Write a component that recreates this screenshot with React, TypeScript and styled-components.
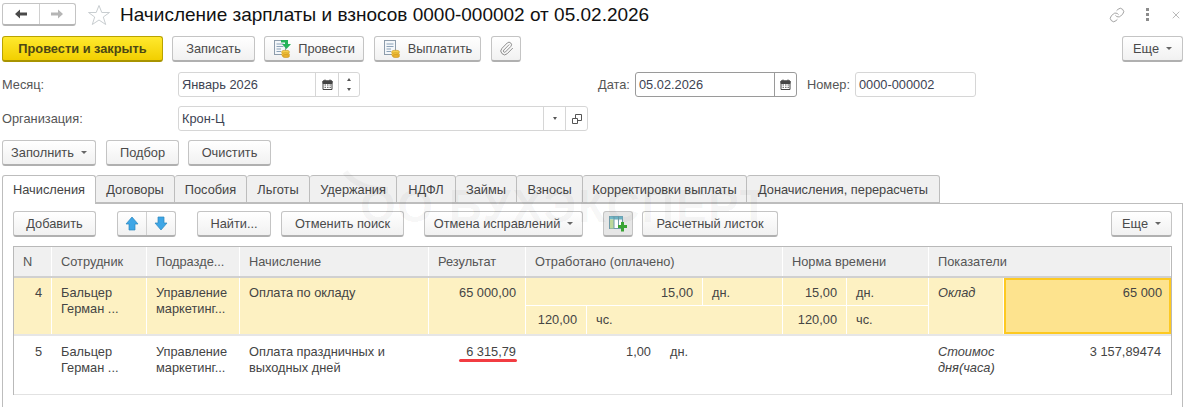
import React from 'react'
import styled, { createGlobalStyle } from 'styled-components'
import { Link, Paperclip, X } from 'lucide-react'

const GlobalStyle = createGlobalStyle`
  html, body {
    margin: 0;
    padding: 0;
    background: #fff;
  }
`

const Page = styled.div`
  position: relative;
  width: 1187px;
  height: 407px;
  overflow: hidden;
  background: #fff;
  color: #4a4a4a;
  font-family: 'Liberation Sans', Arial, sans-serif;
  font-size: 12.8px;
`

const Watermark = styled.div`
  position: absolute;
  left: 360px;
  top: 184px;
  font-size: 46px;
  font-weight: 700;
  line-height: 44px;
  letter-spacing: 1.5px;
  white-space: nowrap;
  color: rgba(0, 0, 0, 0.04);
  pointer-events: none;
`

const Swoosh = styled.svg`
  position: absolute;
  left: 342px;
  top: 170px;
  pointer-events: none;
`

const TitleBar = styled.div`
  display: flex;
  align-items: center;
  height: 23px;
  padding: 3px 0 0 2px;
`

const NavGroup = styled.div`
  display: flex;
  width: 74px;
  height: 23px;
  box-sizing: border-box;
  border: 1px solid #c4c4c4;
  border-bottom: 2px solid #b5b5b5;
  border-radius: 3px;
`

const NavButton = styled.div<{ $divided?: boolean }>`
  flex: 1;
  display: flex;
  align-items: center;
  justify-content: center;
  border-left: ${({ $divided }) => ($divided ? '1px solid #d0d0d0' : 'none')};
`

const StarBox = styled.div`
  display: flex;
  margin: 0 9px 0 11px;
`

const Title = styled.h1`
  flex: 1;
  margin: 0;
  font-size: 19px;
  font-weight: 400;
  line-height: 23px;
  color: #111;
  white-space: nowrap;
`

const WindowTools = styled.div`
  display: flex;
  align-items: center;
  gap: 21px;
  margin-right: 5px;
  color: #8c8c8c;
`

const Dots = styled.div`
  display: flex;
  flex-direction: column;
  gap: 2px;

  i {
    display: block;
    width: 3px;
    height: 3px;
    background: #8c8c8c;
  }
`

const CommandBar = styled.div<{ $top: number }>`
  display: flex;
  align-items: center;
  justify-content: space-between;
  margin-top: ${({ $top }) => $top}px;
  padding: 0 4px 0 2px;
`

const ButtonGroup = styled.div`
  display: flex;
`

const Button = styled.div<{ $width: number; $gap?: number; $pressed?: boolean }>`
  display: flex;
  align-items: center;
  justify-content: center;
  gap: 5px;
  box-sizing: border-box;
  width: ${({ $width }) => $width}px;
  height: 26px;
  margin-left: ${({ $gap }) => $gap ?? 0}px;
  flex-shrink: 0;
  border: 1px solid #c4c4c4;
  border-bottom: 2px solid #b0b0b0;
  border-radius: 3px;
  background: ${({ $pressed }) => ($pressed ? '#e6e6e6' : 'linear-gradient(#ffffff, #f1f1f1)')};
  color: #4a4a4a;
  white-space: nowrap;
`

const PrimaryButton = styled(Button)`
  border-color: #b9a300;
  border-bottom-color: #a89400;
  background: linear-gradient(#ffe92e, #f2cf00);
  color: #4c4714;
  font-weight: 700;
`

const Caret = styled.span`
  display: inline-block;
  width: 0;
  height: 0;
  margin-left: 2px;
  border-left: 3px solid transparent;
  border-right: 3px solid transparent;
  border-top: 3px solid #666;
`

const FormRow = styled.div<{ $top: number }>`
  display: flex;
  align-items: center;
  height: 25px;
  margin-top: ${({ $top }) => $top}px;
  padding-left: 2px;
`

const Label = styled.label<{ $width: number; $left?: number }>`
  flex-shrink: 0;
  width: ${({ $width }) => $width}px;
  margin-left: ${({ $left }) => $left ?? 0}px;
  color: #555;
`

const Field = styled.div<{ $width: number; $active?: boolean; $left?: number }>`
  display: flex;
  flex-shrink: 0;
  box-sizing: border-box;
  width: ${({ $width }) => $width}px;
  height: 25px;
  margin-left: ${({ $left }) => $left ?? 0}px;
  border: 1px solid ${({ $active }) => ($active ? '#9a9a9a' : '#d6d6d6')};
  border-radius: 3px;
  background: #fff;
`

const FieldText = styled.span`
  flex: 1;
  padding-left: 3px;
  line-height: 23px;
  color: #3d4352;
`

const FieldAction = styled.span<{ $width: number; $active?: boolean }>`
  display: flex;
  flex-direction: column;
  align-items: center;
  justify-content: center;
  gap: 7px;
  width: ${({ $width }) => $width}px;
  border-left: 1px solid ${({ $active }) => ($active ? '#9a9a9a' : '#d6d6d6')};
`

const TinyCaret = styled.i<{ $up?: boolean }>`
  display: block;
  width: 0;
  height: 0;
  border-left: 2px solid transparent;
  border-right: 2px solid transparent;
  border-top: ${({ $up }) => ($up ? 'none' : '3px solid #555')};
  border-bottom: ${({ $up }) => ($up ? '3px solid #555' : 'none')};
`

const TabStrip = styled.div`
  display: flex;
  height: 28px;
  margin-top: 9px;
  padding-left: 2px;
`

const Tab = styled.div<{ $width: number; $active?: boolean }>`
  box-sizing: border-box;
  width: ${({ $width }) => $width}px;
  height: ${({ $active }) => ($active ? '29px' : '28px')};
  position: relative;
  z-index: ${({ $active }) => ($active ? 1 : 0)};
  border: 1px solid #bdbdbd;
  border-left-width: ${({ $active }) => ($active ? '1px' : '0')};
  border-bottom: ${({ $active }) => ($active ? 'none' : '1px solid #bdbdbd')};
  border-radius: 3px 3px 0 0;
  background: ${({ $active }) => ($active ? '#fff' : '#f0f0f0')};
  text-align: center;
  line-height: 27px;
  color: #444;
  white-space: nowrap;
`

const Panel = styled.div`
  box-sizing: border-box;
  width: 1181px;
  height: 220px;
  margin-left: 2px;
  padding: 7px 10px 0;
  border: 1px solid #bdbdbd;
`

const PanelBar = styled.div`
  display: flex;
  align-items: center;
  height: 26px;
  margin-bottom: 9px;
`

const BarSpacer = styled.div`
  flex: 1;
`

const ArrowPair = styled.div`
  display: flex;
  width: 59px;
  height: 26px;
  box-sizing: border-box;
  margin-left: 21px;
  flex-shrink: 0;
  border: 1px solid #c4c4c4;
  border-bottom: 2px solid #b0b0b0;
  border-radius: 3px;
  background: linear-gradient(#ffffff, #f1f1f1);
`

const Table = styled.div`
  box-sizing: border-box;
  width: 1159px;
  border: 1px solid #b9b9b9;
  border-bottom: none;
`

const tracks = '38px 95px 93px 189px 97px 61px 116px 80px 64px 82px 75px 167px'
const sparseTracks = '38px 95px 93px 189px 97px 135px 122px 146px 75px 167px'

const HeaderRow = styled.div`
  display: grid;
  grid-template-columns: ${tracks};
  height: 29px;
  border-bottom: 2px solid #d0d0d0;
  background: #f0f0f0;
`

const HeaderCell = styled.div<{ $span?: number }>`
  grid-column: span ${({ $span }) => $span ?? 1};
  box-sizing: border-box;
  padding-left: 9px;
  border-right: 1px solid #fff;
  line-height: 29px;
  color: #555;
  white-space: nowrap;
  overflow: hidden;
`

const DataRow = styled.div<{ $selected?: boolean; $tracks: string }>`
  display: grid;
  grid-template-columns: ${({ $tracks }) => $tracks};
  grid-template-rows: 28px 28px;
  height: ${({ $selected }) => ($selected ? '56px' : '58px')};
  background: ${({ $selected }) => ($selected ? '#fdf1c2' : '#fff')};
  border-bottom: ${({ $selected }) => ($selected ? '2px solid #e6e6e6' : '1px solid #e2e2e2')};
`

const Cell = styled.div<{
  $span?: number
  $rows?: number
  $right?: boolean
  $italic?: boolean
  $lined?: boolean
  $plain?: boolean
  $top?: number
}>`
  grid-column: span ${({ $span }) => $span ?? 1};
  grid-row: span ${({ $rows }) => $rows ?? 1};
  box-sizing: border-box;
  padding: ${({ $top }) => $top ?? 7}px 9px 0;
  border-right: ${({ $plain }) => ($plain ? 'none' : '1px solid #fff')};
  border-bottom: ${({ $lined }) => ($lined ? '1px solid #fff' : 'none')};
  text-align: ${({ $right }) => ($right ? 'right' : 'left')};
  font-style: ${({ $italic }) => ($italic ? 'italic' : 'normal')};
  line-height: 16px;
  color: #444;
  white-space: pre-line;
`

const ActiveCell = styled(Cell)`
  border: 2px solid #fdc921;
  padding: 5px 7px 0;
  background: #fde38e;
`

const UnderlinedValue = styled.span`
  position: relative;
  display: inline-block;

  &::after {
    content: '';
    position: absolute;
    left: -7px;
    right: -1px;
    bottom: -2px;
    height: 3px;
    border-radius: 2px;
    background: #f23c42;
  }
`

const ArrowIcon: React.FC<{ dir: 'left' | 'right'; color: string }> = ({ dir, color }) => (
  <svg width="14" height="12" viewBox="0 0 14 12">
    <path
      d={dir === 'left' ? 'M1 6 6 1.500V4.500H13V7.500H6V10.500Z' : 'M13 6 8 1.500V4.500H1V7.500H8V10.500Z'}
      fill={color}
    />
  </svg>
)

const StarIcon = () => (
  <svg width="24" height="22" viewBox="0 0 24 22">
    <path d="M12 1.500 14.800 8.500H22.500L16.300 13 18.700 20.500 12 16 5.300 20.500 7.700 13 1.500 8.500H9.200Z" fill="#fff" stroke="#c8cdd0" />
  </svg>
)

const PostIcon: React.FC<{ withArrow?: boolean }> = ({ withArrow }) => (
  <svg width="20" height="19" viewBox="0 0 20 19">
    <rect x="1.500" y="1.500" width="11" height="14" fill="#f4f7fa" stroke="#8d9cab" />
    <path d="M3.500 5H10.500M3.500 7.500H10.500M3.500 10H8M3.500 12.500H8" stroke="#8ba2b8" />
    {withArrow && <path d="M8 1H15V5H18L13.500 10 9 5H12V3.500H8Z" fill="#25b25a" />}
    <ellipse cx="12.500" cy="13" rx="4" ry="1.800" fill="#f6cf4c" stroke="#c8941a" strokeWidth="0.6" />
    <ellipse cx="12.500" cy="15.500" rx="4" ry="1.800" fill="#f3c23b" stroke="#c8941a" strokeWidth="0.6" />
    <ellipse cx="13" cy="17" rx="3.500" ry="1.600" fill="#e9b02e" stroke="#c8941a" strokeWidth="0.6" />
  </svg>
)

const CalendarIcon = () => (
  <svg width="11" height="11" viewBox="0 0 11 11">
    <path d="M1 2H10V10.500H1Z" fill="#fff" stroke="#444" />
    <path d="M1 2H10V4.500H1ZM3 0.500V2M8 0.500V2" fill="#444" stroke="#444" />
    <path d="M2.500 6H4M5 6H6.500M7.500 6H9M2.500 8.300H4M5 8.300H6.500M7.500 8.300H9" stroke="#555" />
  </svg>
)

const OpenIcon = () => (
  <svg width="10" height="10" viewBox="0 0 10 10">
    <path d="M3.500 0.500H9.500V6.500H3.500Z" fill="#fff" stroke="#555" />
    <path d="M0.500 4.500H5.500V9.500H0.500Z" fill="#fff" stroke="#555" />
  </svg>
)

const BlueArrow: React.FC<{ up?: boolean }> = ({ up }) => (
  <svg width="14" height="15" viewBox="0 0 14 15">
    <path
      d={up ? 'M7 1 13 8H10V14H4V8H1Z' : 'M7 14 13 7H10V1H4V7H1Z'}
      fill="#3ea6e6"
      stroke="#2d86bd"
      strokeWidth="0.7"
    />
  </svg>
)

const TablePlusIcon = () => (
  <svg width="18" height="17" viewBox="0 0 18 17">
    <rect x="0.500" y="1.500" width="13" height="12" fill="#fdfdfd" stroke="#6f9aa8" />
    <path d="M1 1.500H13.500V4.500H1Z" fill="#6fb7c9" />
    <rect x="1" y="4.500" width="4" height="9" fill="#bcd79a" />
    <path d="M5 1.500V13.500M9.500 1.500V13.500" stroke="#6f9aa8" />
    <path d="M12 7H15V10H18V13H15V16.500H12V13H9V10H12Z" fill="#3aa335" />
  </svg>
)

const dataTabs: [string, number][] = [
  ['Договоры', 79],
  ['Пособия', 72],
  ['Льготы', 63],
  ['Удержания', 87],
  ['НДФЛ', 59],
  ['Займы', 61],
  ['Взносы', 66],
  ['Корректировки выплаты', 164],
  ['Доначисления, перерасчеты', 193],
]

const App: React.FC = () => {
  return (
    <Page>
      <GlobalStyle />
      <TitleBar>
        <NavGroup>
          <NavButton>
            <ArrowIcon dir="left" color="#4a4a4a" />
          </NavButton>
          <NavButton $divided>
            <ArrowIcon dir="right" color="#b5b5b5" />
          </NavButton>
        </NavGroup>
        <StarBox>
          <StarIcon />
        </StarBox>
        <Title>Начисление зарплаты и взносов 0000-000002 от 05.02.2026</Title>
        <WindowTools>
          <Link size={16} strokeWidth={1.2} />
          <Dots>
            <i />
            <i />
            <i />
          </Dots>
          <X size={12} strokeWidth={1.2} />
        </WindowTools>
      </TitleBar>

      <CommandBar $top={10}>
        <ButtonGroup>
          <PrimaryButton $width={161}>Провести и закрыть</PrimaryButton>
          <Button $width={83} $gap={9}>Записать</Button>
          <Button $width={100} $gap={9}>
            <PostIcon withArrow />
            Провести
          </Button>
          <Button $width={107} $gap={10}>
            <PostIcon />
            Выплатить
          </Button>
          <Button $width={30} $gap={10}>
            <Paperclip size={15} strokeWidth={1.3} color="#777" />
          </Button>
        </ButtonGroup>
        <Button $width={61}>
          Еще
          <Caret />
        </Button>
      </CommandBar>

      <FormRow $top={10}>
        <Label $width={176}>Месяц:</Label>
        <Field $width={182}>
          <FieldText>Январь 2026</FieldText>
          <FieldAction $width={22}>
            <CalendarIcon />
          </FieldAction>
          <FieldAction $width={20}>
            <TinyCaret $up />
            <TinyCaret />
          </FieldAction>
        </Field>
        <Label $width={37} $left={238}>Дата:</Label>
        <Field $width={162} $active>
          <FieldText>05.02.2026</FieldText>
          <FieldAction $width={21} $active>
            <CalendarIcon />
          </FieldAction>
        </Field>
        <Label $width={48} $left={10}>Номер:</Label>
        <Field $width={121}>
          <FieldText>0000-000002</FieldText>
        </Field>
      </FormRow>

      <FormRow $top={9}>
        <Label $width={176}>Организация:</Label>
        <Field $width={410}>
          <FieldText>Крон-Ц</FieldText>
          <FieldAction $width={21}>
            <TinyCaret />
          </FieldAction>
          <FieldAction $width={21}>
            <OpenIcon />
          </FieldAction>
        </Field>
      </FormRow>

      <CommandBar $top={9}>
        <ButtonGroup>
          <Button $width={94}>
            Заполнить
            <Caret />
          </Button>
          <Button $width={73} $gap={10}>Подбор</Button>
          <Button $width={83} $gap={9}>Очистить</Button>
        </ButtonGroup>
      </CommandBar>

      <TabStrip>
        <Tab $width={94} $active>Начисления</Tab>
        {dataTabs.map(([name, width]) => (
          <Tab key={name} $width={width}>
            {name}
          </Tab>
        ))}
      </TabStrip>

      <Panel>
        <PanelBar>
          <Button $width={83}>Добавить</Button>
          <ArrowPair>
            <NavButton>
              <BlueArrow up />
            </NavButton>
            <NavButton $divided>
              <BlueArrow />
            </NavButton>
          </ArrowPair>
          <Button $width={74} $gap={21}>Найти...</Button>
          <Button $width={123} $gap={10}>Отменить поиск</Button>
          <Button $width={159} $gap={20}>
            Отмена исправлений
            <Caret />
          </Button>
          <Button $width={30} $gap={20} $pressed>
            <TablePlusIcon />
          </Button>
          <Button $width={136} $gap={9}>Расчетный листок</Button>
          <BarSpacer />
          <Button $width={61}>
            Еще
            <Caret />
          </Button>
        </PanelBar>

        <Table>
          <HeaderRow>
            <HeaderCell>N</HeaderCell>
            <HeaderCell>Сотрудник</HeaderCell>
            <HeaderCell>Подразде...</HeaderCell>
            <HeaderCell>Начисление</HeaderCell>
            <HeaderCell>Результат</HeaderCell>
            <HeaderCell $span={3}>Отработано (оплачено)</HeaderCell>
            <HeaderCell $span={2}>Норма времени</HeaderCell>
            <HeaderCell $span={2}>Показатели</HeaderCell>
          </HeaderRow>

          <DataRow $selected $tracks={tracks}>
            <Cell $rows={2} $right>4</Cell>
            <Cell $rows={2}>{'Бальцер\nГерман ...'}</Cell>
            <Cell $rows={2}>{'Управление\nмаркетинг...'}</Cell>
            <Cell $rows={2}>Оплата по окладу</Cell>
            <Cell $rows={2} $right>65 000,00</Cell>
            <Cell $span={2} $right $lined>15,00</Cell>
            <Cell $lined>дн.</Cell>
            <Cell $right $lined>15,00</Cell>
            <Cell $lined>дн.</Cell>
            <Cell $rows={2} $italic>Оклад</Cell>
            <ActiveCell $rows={2} $right $plain>65 000</ActiveCell>
            <Cell $right $top={6}>120,00</Cell>
            <Cell $span={2} $top={6}>чс.</Cell>
            <Cell $right $top={6}>120,00</Cell>
            <Cell $top={6}>чс.</Cell>
          </DataRow>

          <DataRow $tracks={sparseTracks}>
            <Cell $rows={2} $right $top={8}>5</Cell>
            <Cell $rows={2} $top={8}>{'Бальцер\nГерман ...'}</Cell>
            <Cell $rows={2} $top={8}>{'Управление\nмаркетинг...'}</Cell>
            <Cell $rows={2} $top={8}>{'Оплата праздничных и\nвыходных дней'}</Cell>
            <Cell $rows={2} $right $top={8}>
              <UnderlinedValue>6 315,79</UnderlinedValue>
            </Cell>
            <Cell $rows={2} $right $top={8}>1,00</Cell>
            <Cell $rows={2} $top={8}>дн.</Cell>
            <Cell $rows={2} $top={8} />
            <Cell $rows={2} $italic $top={8}>{'Стоимос\nдня(часа)'}</Cell>
            <Cell $rows={2} $right $top={8}>3 157,89474</Cell>
          </DataRow>
        </Table>
      </Panel>

      <Swoosh width="50" height="24" viewBox="0 0 50 24">
        <path d="M3 2C12 14 28 20 46 20" fill="none" stroke="rgba(0,0,0,0.035)" strokeWidth="6" />
      </Swoosh>
      <Watermark>ОО БУХЭКСПЕРТ</Watermark>
    </Page>
  )
}

export default App
